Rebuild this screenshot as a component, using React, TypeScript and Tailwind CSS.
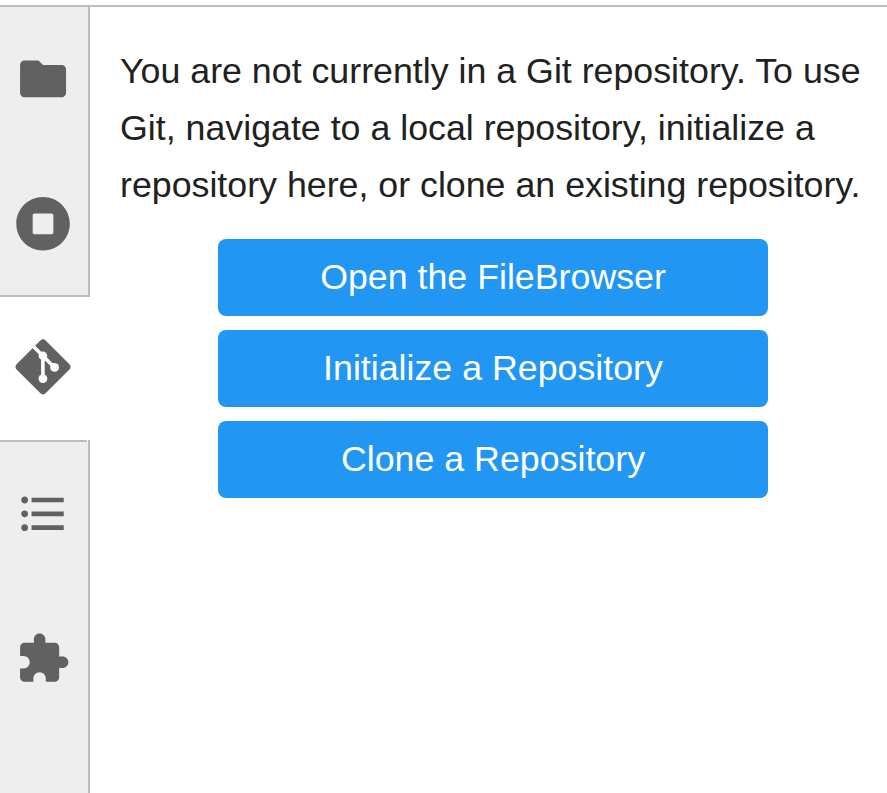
import type { ReactNode } from 'react';

function Icon({ box = '-0.2 -0.1 24.35 24.35', children }: { box?: string; children: ReactNode }) {
  return (
    <svg viewBox={box} className="block h-14 w-14 shrink-0 fill-[#616161]">
      {children}
    </svg>
  );
}

function ActionButton({ children }: { children: ReactNode }) {
  return (
    <button className="h-[77px] w-[550px] rounded-lg bg-[#2196f3] text-center text-[35.75px] leading-[77px] text-white">
      {children}
    </button>
  );
}

function Sidebar() {
  return (
    <nav className="flex w-[90px] shrink-0 flex-col">
      <div className="flex h-[290px] flex-col gap-[89px] border-r-2 border-b-2 border-[#bdbdbd] bg-[#eeeeee] pt-11 pl-[15px]">
        <Icon>
          <path d="M10 4H4c-1.1 0-1.99.9-1.99 2L2 18c0 1.1.9 2 2 2h16c1.1 0 2-.9 2-2V8c0-1.1-.9-2-2-2h-8l-2-2z" />
        </Icon>
        <Icon box="-4 -2 519.4 519.4">
          <path d="M256 8C119 8 8 119 8 256s111 248 248 248 248-111 248-248S393 8 256 8zm96 328c0 8.8-7.2 16-16 16H176c-8.8 0-16-7.2-16-16V176c0-8.8 7.2-16 16-16h160c8.8 0 16 7.2 16 16v160z" />
        </Icon>
      </div>
      <div className="h-[143px] bg-white pt-[42px] pl-[15px]">
        <Icon box="0 0 56 56">
          <rect x="7.5" y="7.4" width="41" height="41" rx="4" transform="rotate(45 28 27.9)" />
          <path d="M16 4.9L39.5 28.4M27.9 16.7V39.6" fill="none" stroke="#fff" strokeWidth="3.6" />
          <g fill="#fff">
            <circle cx="27.9" cy="16.7" r="4.3" />
            <circle cx="39.6" cy="28.4" r="4.4" />
            <circle cx="27.9" cy="39.6" r="4.4" />
          </g>
        </Icon>
      </div>
      <div className="flex flex-1 border-r-2 border-[#bdbdbd] bg-[#eeeeee]">
        <div className="flex w-[87px] flex-col gap-[89px] border-t-2 border-[#bdbdbd] pt-11 pl-[15px]">
          <Icon>
            <path d="M4 10.5c-.83 0-1.5.67-1.5 1.5s.67 1.5 1.5 1.5 1.5-.67 1.5-1.5-.67-1.5-1.5-1.5zm0-6c-.83 0-1.5.67-1.5 1.5S3.17 7.5 4 7.5 5.5 6.83 5.5 6 4.83 4.5 4 4.5zm0 12c-.83 0-1.5.68-1.5 1.5s.68 1.5 1.5 1.5 1.5-.68 1.5-1.5-.67-1.5-1.5-1.5zM7 19h14v-2H7v2zm0-6h14v-2H7v2zm0-8v2h14V5H7z" />
          </Icon>
          <Icon>
            <path d="M20.5 11H19V7c0-1.1-.9-2-2-2h-4V3.5C13 2.12 11.88 1 10.5 1S8 2.12 8 3.5V5H4c-1.1 0-1.99.9-1.99 2v3.8H3.5c1.49 0 2.7 1.21 2.7 2.7s-1.21 2.7-2.7 2.7H2V20c0 1.1.9 2 2 2h3.8v-1.5c0-1.49 1.21-2.7 2.7-2.7 1.49 0 2.7 1.21 2.7 2.7V22H17c1.1 0 2-.9 2-2v-4h1.5c1.38 0 2.5-1.12 2.5-2.5S21.88 11 20.5 11z" />
          </Icon>
        </div>
        <div className="h-[2px] w-px bg-white" />
      </div>
    </nav>
  );
}

export default function App() {
  return (
    <div className="flex h-[793px] w-[887px] flex-col overflow-hidden bg-white pt-[5px] font-['Liberation_Sans',Arial,sans-serif]">
      <div className="h-[2px] shrink-0 bg-[#bdbdbd]" />
      <div className="flex min-h-0 flex-1">
        <Sidebar />
        <main className="flex flex-1 flex-col pt-[36px] pl-[30px]">
          <p className="text-[35.75px] leading-[57px] whitespace-nowrap text-[#212121]">
            You are not currently in a Git repository. To use
            <br />
            Git, navigate to a local repository, initialize a
            <br />
            repository here, or clone an existing repository.
          </p>
          <div className="mt-[25px] ml-[98px] flex flex-col gap-[14px]">
            <ActionButton>Open the FileBrowser</ActionButton>
            <ActionButton>Initialize a Repository</ActionButton>
            <ActionButton>Clone a Repository</ActionButton>
          </div>
        </main>
      </div>
    </div>
  );
}
